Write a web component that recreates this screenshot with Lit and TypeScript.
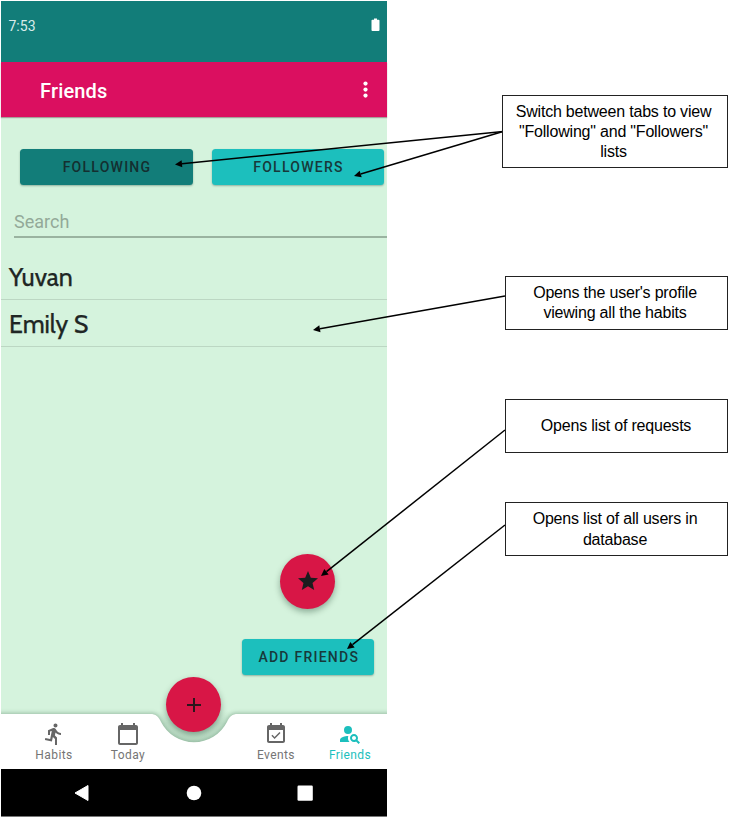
import { LitElement, html, css, svg } from "lit";
import { customElement } from "lit/decorators.js";

const RUN =
  "M13.49 5.48c1.1 0 2-.9 2-2s-.9-2-2-2-2 .9-2 2 .9 2 2 2zm-3.6 13.9l1-4.4 2.1 2v6h2v-7.5l-2.1-2 .6-3c1.3 1.5 3.3 2.5 5.5 2.5v-2c-1.9 0-3.5-1-4.3-2.4l-1-1.6c-.4-.6-1-1-1.7-1-.3 0-.5.1-.8.1l-5.2 2.2v4.7h2v-3.4l1.8-.7-1.6 8.1-4.9-1-.4 2 7 1.4z";
const CALENDAR =
  "M20 3h-1V1h-2v2H7V1H5v2H4c-1.1 0-2 .9-2 2v16c0 1.1.9 2 2 2h16c1.1 0 2-.9 2-2V5c0-1.1-.9-2-2-2zm0 18H4V8h16v13z";
const EVENT =
  "M16.53 11.06L15.47 10l-4.88 4.88-2.12-2.12-1.06 1.06L10.59 17l5.94-5.94zM19 3h-1V1h-2v2H8V1H6v2H5c-1.11 0-1.99.9-1.99 2L3 19c0 1.1.89 2 2 2h14c1.1 0 2-.9 2-2V5c0-1.1-.9-2-2-2zm0 16H5V8h14v11z";
const PERSON_SEARCH =
  "M10 4a4 4 0 1 0 0 8 4 4 0 0 0 0-8zM10.35 14.01C7.62 13.91 2 15.27 2 18v2h9.54c-2.47-2.76-1.23-5.89-1.19-5.99zM19.43 18.02c.36-.59.57-1.28.57-2.02 0-2.21-1.79-4-4-4s-4 1.79-4 4 1.79 4 4 4c.74 0 1.43-.22 2.02-.57L20.59 22 22 20.59l-2.57-2.57zM16 18c-1.1 0-2-.9-2-2s.9-2 2-2 2 .9 2 2-.9 2-2 2z";

const ARROWS = [
  [503, 131.5, 175, 164.5],
  [503, 131.5, 354, 176],
  [505, 296, 313, 330],
  [505, 430, 321, 576],
  [505, 525, 347, 649],
];

@customElement("friends-screen")
export class FriendsScreen extends LitElement {
  static styles = css`
    :host {
      display: flex;
      flex-direction: column;
      position: relative;
      box-sizing: border-box;
      width: 386px;
      height: 816px;
      background: #d5f3dd;
      font-family: Roboto, sans-serif;
      color: #1d2a2b;
    }
    .status {
      flex: none;
      box-sizing: border-box;
      height: 61px;
      padding: 15px 7px 0 7.5px;
      display: flex;
      justify-content: space-between;
      align-items: flex-start;
      background: #127d79;
      color: #d9ecea;
      font-size: 14px;
      line-height: 20px;
    }
    .battery {
      margin-top: 1px;
    }
    .bar {
      flex: none;
      height: 55px;
      padding: 0 18px 0 39px;
      display: flex;
      justify-content: space-between;
      align-items: center;
      background: #db0f60;
      box-shadow: 0 1px 1px rgba(120, 80, 90, 0.5);
      color: #fff;
      font-size: 20px;
      line-height: 24px;
      font-weight: 500;
      letter-spacing: 0.15px;
    }
    .title {
      padding-top: 2px;
    }
    .tabs {
      display: flex;
      gap: 19px;
      padding: 31.5px 0 0 19px;
    }
    .btn {
      flex: none;
      width: 172.5px;
      height: 36px;
      padding: 0 0 0 1.5px;
      border: 0;
      border-radius: 3.5px;
      background: #1cbfbd;
      color: #17393a;
      font: 500 14px/36px Roboto, sans-serif;
      letter-spacing: 1.25px;
      text-align: center;
      box-shadow: 0 1px 2px rgba(0, 40, 30, 0.32);
    }
    .on {
      background: #127d79;
      color: #142f30;
    }
    .search {
      margin: 21.5px 0 0 13px;
      height: 30px;
      border-bottom: 2px solid #9ab3a0;
      color: #93a998;
      font-size: 18px;
      line-height: 31px;
    }
    .row {
      box-sizing: border-box;
      height: 47px;
      padding-left: 8px;
      border-bottom: 1px solid #bcd7c3;
      font: 400 25px/49px Cabin, Lato, sans-serif;
      color: #202624;
      -webkit-text-stroke: 0.25px #202624;
    }
    .first {
      margin-top: 15px;
    }
    .fab {
      position: absolute;
      width: 55px;
      height: 55px;
      border-radius: 50%;
      background: #d81646;
      box-shadow: 0 3px 6px rgba(0, 40, 20, 0.35);
      display: flex;
      align-items: center;
      justify-content: center;
    }
    .star {
      left: 279px;
      top: 552.5px;
    }
    .plus {
      left: 165px;
      top: 676px;
    }
    .add {
      position: absolute;
      left: 241px;
      top: 638px;
      width: 132px;
      line-height: 37px;
    }
    .nav {
      position: relative;
      margin-top: auto;
      flex: none;
      height: 55px;
      display: flex;
      padding-left: 16px;
    }
    .sheet {
      position: absolute;
      left: 0;
      top: -6px;
      overflow: hidden;
    }
    .shape {
      filter: drop-shadow(0 -1px 2px rgba(0, 50, 20, 0.28));
    }
    .item {
      position: relative;
      width: 74px;
      display: flex;
      flex-direction: column;
      align-items: center;
      padding-top: 8px;
      color: #757575;
      fill: #666;
      font-size: 12px;
      font-weight: 400;
      letter-spacing: 0.4px;
      line-height: 15px;
    }
    .item svg {
      margin-bottom: 2px;
      flex: none;
    }
    .active {
      color: #1cbfbd;
      fill: #1cbfbd;
    }
    .gap {
      width: 74px;
    }
    .system {
      flex: none;
      height: 47px;
      background: #000;
      border-bottom: 1px solid #777;
    }
  `;

  private item(path: string, label: string, active = false) {
    return html`<div class="item ${active ? "active" : ""}">
      <svg width="24" height="24" viewBox="0 0 24 24"><path d=${path} /></svg>
      <span>${label}</span>
    </div>`;
  }

  render() {
    return html`
      <div class="status">
        <span>7:53</span>
        <svg class="battery" width="9" height="15" viewBox="0 0 9 15">
          <path d="M3 1.5h3v1.2h1.6q.9 0 .9.9v9.5q0 .9-.9.9H1.4q-.9 0-.9-.9V3.6q0-.9.9-.9H3z" fill="#fff" />
        </svg>
      </div>
      <div class="bar">
        <span class="title">Friends</span>
        <svg width="7" height="18" viewBox="0 0 7 18" fill="#fff">
          <circle cx="3.5" cy="2.6" r="2.1" />
          <circle cx="3.5" cy="8.6" r="2.1" />
          <circle cx="3.5" cy="14.6" r="2.1" />
        </svg>
      </div>
      <div class="tabs">
        <button class="btn on">FOLLOWING</button>
        <button class="btn">FOLLOWERS</button>
      </div>
      <div class="search">Search</div>
      <div class="row first">Yuvan</div>
      <div class="row">Emily S</div>

      <div class="nav">
        <svg class="sheet" width="386" height="61" viewBox="0 0 386 61">
          <defs>
            <linearGradient id="dip" x1="0" y1="0" x2="0" y2="1">
              <stop offset="0" stop-color="#0a4a24" stop-opacity="0" />
              <stop offset="0.4" stop-color="#0a4a24" stop-opacity="0.1" />
              <stop offset="1" stop-color="#0a4a24" stop-opacity="0.1" />
            </linearGradient>
          </defs>
          <path d="M149 3H237L226 14A37 37 0 0 1 160 14Z" fill="url(#dip)" />
          <path
            class="shape"
            d="M-5 6H149C155 6 157.500 8.500 160 14A37 37 0 0 0 226 14C228.500 8.500 231 6 237 6H391V70H-5Z"
            fill="#fff"
          />
        </svg>
        ${this.item(RUN, "Habits")} ${this.item(CALENDAR, "Today")}
        <div class="gap"></div>
        ${this.item(EVENT, "Events")} ${this.item(PERSON_SEARCH, "Friends", true)}
      </div>
      <div class="system">
        <svg width="386" height="47" viewBox="0 0 386 47" fill="#fff">
          <path d="M87 16.500V31.500L74 24Z" stroke="#fff" stroke-linejoin="round" />
          <circle cx="193" cy="24" r="7.300" />
          <rect x="296.500" y="16.500" width="15.300" height="15.300" rx="1.200" />
        </svg>
      </div>

      <div class="fab star">
        <svg width="24" height="24" viewBox="0 0 24 24">
          <path
            d="M12 17.270L18.180 21l-1.640-7.030L22 9.240l-7.190-.61L12 2 9.190 8.630 2 9.240l5.460 4.730L5.820 21z"
            fill="#1c1c1e"
          />
        </svg>
      </div>
      <button class="btn add">ADD FRIENDS</button>
      <div class="fab plus">
        <svg width="24" height="24" viewBox="0 0 24 24">
          <path d="M19 13h-6v6h-2v-6H5v-2h6V5h2v6h6z" fill="#2b161c" />
        </svg>
      </div>
    `;
  }
}

@customElement("app-root")
export class AppRoot extends LitElement {
  static styles = css`
    :host {
      display: block;
      position: relative;
      width: 733px;
      height: 819px;
      overflow: hidden;
      background: #fff;
    }
    .phone {
      margin: 0 0 0 1px;
      top: 1px;
    }
    .arrows {
      position: absolute;
      left: 0;
      top: 0;
    }
    .note {
      position: absolute;
      left: 505px;
      width: 223px;
      height: 54px;
      box-sizing: border-box;
      padding-right: 1px;
      border: 1px solid #222;
      background: #fff;
      display: flex;
      align-items: center;
      justify-content: center;
      text-align: center;
      white-space: pre-line;
      font: 16px/20px "Liberation Sans", Arial, sans-serif;
      letter-spacing: -0.2px;
      color: #000;
    }
    .n1 {
      left: 502px;
      top: 95px;
      width: 226px;
      height: 73px;
      padding-right: 3px;
    }
    .n2 {
      top: 276px;
      padding-right: 3px;
    }
    .n3 {
      top: 399px;
    }
    .n4 {
      top: 502px;
      padding-right: 3px;
      line-height: 21px;
    }
  `;

  private arrow([x1, y1, x2, y2]: number[]) {
    const len = Math.hypot(x2 - x1, y2 - y1);
    const ux = (x2 - x1) / len;
    const uy = (y2 - y1) / len;
    const bx = x2 - ux * 7;
    const by = y2 - uy * 7;
    const w = 3.5;
    return svg`<path d="M${x1} ${y1}L${bx} ${by}" stroke="#000" stroke-width="1.5" />
      <path d="M${x2} ${y2}L${bx - uy * w} ${by + ux * w}L${bx + uy * w} ${by - ux * w}Z" fill="#000" />`;
  }

  render() {
    return html`
      <friends-screen class="phone"></friends-screen>
      <svg class="arrows" width="733" height="819" viewBox="0 0 733 819">
        ${ARROWS.map((a) => this.arrow(a))}
      </svg>
      <div class="note n1">${'Switch between tabs to view\n"Following" and "Followers"\nlists'}</div>
      <div class="note n2">${"Opens the user's profile\nviewing all the habits"}</div>
      <div class="note n3">Opens list of requests</div>
      <div class="note n4">${"Opens list of all users in\ndatabase"}</div>
    `;
  }
}
